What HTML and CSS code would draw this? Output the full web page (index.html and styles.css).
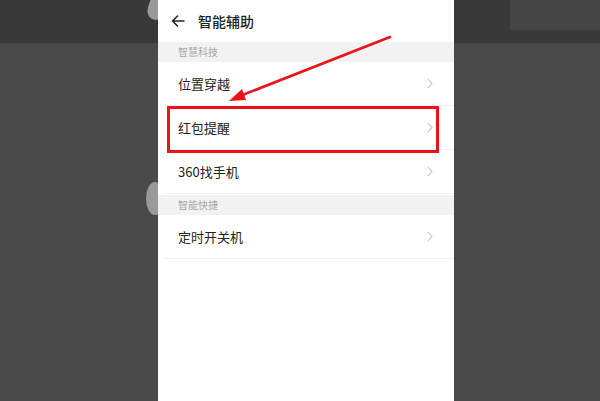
FILE: index.html
```html
<!DOCTYPE html>
<html lang="zh">
<head>
<meta charset="utf-8">
<link rel="stylesheet" href="styles.css">
</head>
<body>
<div class="stage">
  <span class="blob blob-top"></span>
  <span class="blob blob-mid"></span>
  <span class="blur blur-right"></span>
  <div class="phone">
    <div class="header">
      <svg class="back" width="14" height="12" viewBox="0 0 14 12"><path d="M13 6H1.5M6.5 1L1.5 6l5 5" fill="none" stroke="#222" stroke-width="1.6" stroke-linecap="round" stroke-linejoin="round"/></svg>
      <span class="title">智能辅助</span>
    </div>
    <div class="section">智慧科技</div>
    <div class="row"><span class="label">位置穿越</span><svg class="chev" width="6" height="11" viewBox="0 0 6 11"><path d="M0.8 0.8L5 5.5 0.8 10.2" fill="none" stroke="#c4c4c4" stroke-width="1.1"/></svg></div>
    <div class="row"><span class="label">红包提醒</span><svg class="chev" width="6" height="11" viewBox="0 0 6 11"><path d="M0.8 0.8L5 5.5 0.8 10.2" fill="none" stroke="#c4c4c4" stroke-width="1.1"/></svg></div>
    <div class="row"><span class="label">360找手机</span><svg class="chev" width="6" height="11" viewBox="0 0 6 11"><path d="M0.8 0.8L5 5.5 0.8 10.2" fill="none" stroke="#c4c4c4" stroke-width="1.1"/></svg></div>
    <div class="section">智能快捷</div>
    <div class="row"><span class="label">定时开关机</span><svg class="chev" width="6" height="11" viewBox="0 0 6 11"><path d="M0.8 0.8L5 5.5 0.8 10.2" fill="none" stroke="#c4c4c4" stroke-width="1.1"/></svg></div>
    <div class="highlight"></div>
  </div>
  <svg class="pointer" width="600" height="401" viewBox="0 0 600 401">
    <line x1="390" y1="37" x2="240" y2="96" stroke="#e8141a" stroke-width="2.6" stroke-linecap="round"/>
    <polygon points="229,101 242,89 246,100" fill="#e8141a"/>
  </svg>
</div>
</body>
</html>
```
FILE: styles.css
```css
* { box-sizing: border-box; }
html, body { margin: 0; padding: 0; }
body {
  width: 600px;
  height: 401px;
  overflow: hidden;
  font-family: "Noto Sans CJK SC", "Noto Sans", sans-serif;
  background: linear-gradient(to bottom, #393939 0, #393939 43px, #4a4a4a 43px, #4a4a4a 100%);
}
.stage {
  position: relative;
  width: 600px;
  height: 401px;
  padding-left: 158px;
}
.phone {
  position: relative;
  width: 296px;
  height: 401px;
  background: #fff;
  display: flex;
  flex-direction: column;
}
.header {
  height: 41px;
  display: flex;
  align-items: center;
  padding-left: 13px;
  gap: 13px;
}
.back { display: block; }
.title {
  font-size: 14px;
  font-weight: 500;
  color: #1e1e1e;
}
.section {
  height: 20px;
  background: #f2f2f2;
  color: #a6a6a6;
  font-size: 10px;
  line-height: 20px;
  padding-left: 20px;
  margin-top: 1px;
}
.row {
  height: 44px;
  display: flex;
  align-items: center;
  justify-content: space-between;
  padding: 0 21px 0 20px;
  border-bottom: 1px solid #f1f1f1;
  margin-left: 6px;
  padding-left: 14px;
}
.label {
  font-size: 13px;
  color: #222;
}
.chev { display: block; }
.highlight {
  position: absolute;
  left: 9px;
  top: 106px;
  width: 272px;
  height: 47px;
  border: 3px solid #e8141a;
}
.pointer {
  position: absolute;
  left: 0;
  top: 0;
  pointer-events: none;
}
.blob {
  position: absolute;
  background: #9a9a9a;
}
.blob-top {
  left: 148px;
  top: -6px;
  width: 14px;
  height: 26px;
  border-radius: 0 0 0 14px;
  transform: skewX(-20deg);
}
.blob-mid {
  left: 146px;
  top: 182px;
  width: 18px;
  height: 33px;
  border-radius: 50%;
}
.blur {
  position: absolute;
  background: #454545;
}
.blur-right {
  left: 510px;
  top: 0;
  width: 90px;
  height: 30px;
}
```
